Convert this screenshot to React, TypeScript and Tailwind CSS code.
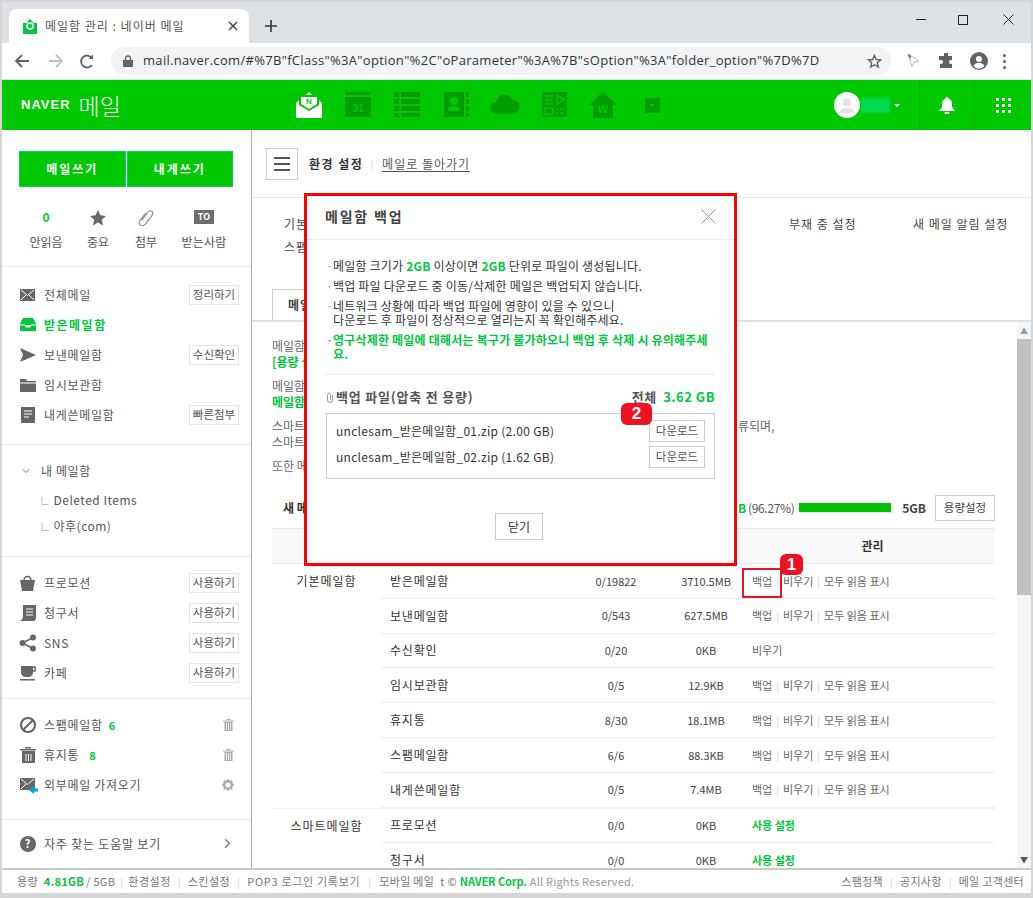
import { ReactNode } from 'react';
import { ChevronDown, ChevronRight } from 'lucide-react';

const GREEN = 'text-[#00c73c]';

const TabGlobe = () => (
  <svg width="16" height="16" viewBox="0 0 16 16">
    <path d="M1 5h4l1-2 2-2 2 2 1 2h4v11H1z" fill="#00c73c" />
    <circle cx="8" cy="8" r="3" fill="none" stroke="#fff" strokeWidth="1.6" />
  </svg>
);

const Ico = ({ children, w = 18, h = 18 }: { children: ReactNode; w?: number; h?: number }) => (
  <svg width={w} height={h} viewBox={`0 0 ${w} ${h}`} fill="#666" className="shrink-0">
    {children}
  </svg>
);

const sideIcons: Record<string, ReactNode> = {
  all: (
    <Ico>
      <rect x="1" y="3" width="15" height="12" />
      <path d="M2 4l6.500 5.500L15 4M2 14l5-5M15 14l-5-5" stroke="#fff" fill="none" />
    </Ico>
  ),
  inbox: (
    <Ico>
      <path d="M4 2h10l3 6v7H1V8z M1 9h5l1 2h4l1-2h5" fill="#00c73c" />
      <path d="M1 9h5l1 2h4l1-2h5" fill="none" stroke="#fff" />
    </Ico>
  ),
  sent: (
    <Ico>
      <path d="M1 2l16 7-16 7 3-7z" />
    </Ico>
  ),
  draft: (
    <Ico>
      <path d="M1 3h6l1 2h9v11H1z" />
      <path d="M1 7h16" stroke="#fff" />
    </Ico>
  ),
  self: (
    <Ico>
      <rect x="2" y="1" width="14" height="16" />
      <path d="M5 5h8M5 8h8M5 11h5" stroke="#fff" strokeWidth="1.200" />
    </Ico>
  ),
  bag: (
    <Ico>
      <path d="M1 6h15l-2 11H3z" />
      <path d="M5 6a3.500 3.500 0 017 0" fill="none" stroke="#666" strokeWidth="1.500" />
    </Ico>
  ),
  bill: (
    <Ico>
      <path d="M4 1h13v12c0 2-1 4-2 4H1c1-1 3-2 3-4z" />
      <path d="M7 5h7M7 8h7M7 11h7" stroke="#fff" strokeDasharray="7 0" />
    </Ico>
  ),
  share: (
    <Ico>
      <circle cx="3.500" cy="9" r="3" />
      <circle cx="14" cy="3.500" r="3" />
      <circle cx="14" cy="14.500" r="3" />
      <path d="M3.500 9L14 3.500M3.500 9L14 14.500" stroke="#666" strokeWidth="1.500" />
    </Ico>
  ),
  cafe: (
    <Ico>
      <path d="M2 2h12v6c0 3-2 5-5 5H7c-3 0-5-2-5-5z" />
      <path d="M14 3h2v4h-2" fill="none" stroke="#666" strokeWidth="1.500" />
      <rect x="1" y="15" width="15" height="1.500" />
    </Ico>
  ),
  spam: (
    <Ico>
      <circle cx="9" cy="9" r="7" fill="none" stroke="#666" strokeWidth="2.200" />
      <path d="M4 14L14 4" stroke="#666" strokeWidth="2.200" />
    </Ico>
  ),
  trash: (
    <Ico>
      <path d="M3 5h13v12H3zM1 3h16v1.500H1zM6 1h6v1.500H6z" />
      <path d="M7 8v7M9.500 8v7M12 8v7" stroke="#fff" />
    </Ico>
  ),
  ext: (
    <Ico w={20}>
      <rect x="1" y="2" width="15" height="12" />
      <path d="M2 3l6.500 5.500L15 3M2 13l5-5" stroke="#fff" fill="none" />
      <path d="M10 14l5-4v2.500h4v3h-4V18z" fill="#00a0e0" />
    </Ico>
  ),
};

const SmallBtn = ({ label }: { label: string }) => (
  <span className="flex h-[20px] w-[50px] items-center justify-center border border-[#e3e3e3] text-[11.5px] text-[#555]">
    {label}
  </span>
);

const SideRow = ({
  icon,
  label,
  btn,
  active,
  tail,
  count,
  wideCount,
}: {
  icon: string;
  label: string;
  btn?: string;
  active?: boolean;
  tail?: ReactNode;
  count?: string;
  wideCount?: boolean;
}) => (
  <div className="flex h-[30px] items-center pl-[17px] pr-[12px]">
    <span className="w-[25px]">{sideIcons[icon]}</span>
    <span className={active ? `font-bold tracking-[1.5px] ${GREEN}` : 'tracking-[0.7px] text-[#555]'}>{label}</span>
    {count && <span className={`text-[11px] font-bold ${wideCount ? 'ml-[10px]' : 'ml-[6px]'} ${GREEN}`}>{count}</span>}
    <span className="ml-auto">{btn ? <SmallBtn label={btn} /> : tail}</span>
  </div>
);

const TrashTail = () => (
  <svg width="11" height="12" viewBox="0 0 11 12" className="mr-[5px] block" fill="#aaa">
    <path d="M0 1.500h11v1H0zM1.500 3h8v9h-8zM3.500 0h4v1h-4z" />
    <path d="M3.500 4v7M5.500 4v7M7.500 4v7" stroke="#fff" strokeWidth="0.800" />
  </svg>
);

const Sidebar = () => (
  <aside className="flex w-[250px] shrink-0 flex-col border-r border-[#b5b5b5] bg-white text-[12px]">
    <div className="h-[137px] border-b border-[#ebebeb]">
      <div className="flex pl-[17px] pt-[21px]">
        {['메일쓰기', '내게쓰기'].map(t => (
          <span
            key={t}
            className="mr-px flex h-[36px] w-[106.500px] items-center justify-center border border-[#00d06a] bg-[#00c800] text-[12px] font-bold tracking-[2px] text-white"
          >
            {t}
          </span>
        ))}
      </div>
      <div className="mt-[21px] grid grid-cols-[46px_58px_38px_78px] pl-[21px] text-[#555]">
        <div className="flex flex-col items-center">
          <span className={`h-[20px] text-[12px] font-bold ${GREEN}`}>0</span>
          <span className="mt-[5px]">안읽음</span>
        </div>
        <div className="flex flex-col items-center">
          <svg width="16" height="16" viewBox="0 0 16 16" fill="#666" className="h-[20px]">
            <path d="M8 0l2.400 5.300 5.600.6-4.200 3.800 1.200 5.700L8 12.500l-5 2.900 1.200-5.700L0 5.900l5.600-.6z" />
          </svg>
          <span className="mt-[5px]">중요</span>
        </div>
        <div className="flex flex-col items-center">
          <svg width="16" height="18" viewBox="0 0 16 18" fill="none" stroke="#999" strokeWidth="1.300" className="h-[20px]">
            <path d="M4 11l6-8c1-1.500 3-1.500 4-.5s1 2.500 0 4l-7 9c-1.500 1.500-3 1.500-4.500.5S1 13 2 11.500L8 4" />
          </svg>
          <span className="mt-[5px]">첨부</span>
        </div>
        <div className="flex flex-col items-center">
          <span className="mt-[2px] flex h-[14px] w-[20px] items-center justify-center bg-[#6e6e6e] text-[9px] font-bold text-white">TO</span>
          <span className="mt-[9px] tracking-[0.2px]">받는사람</span>
        </div>
      </div>
    </div>
    <div className="h-[178px] border-b border-[#ebebeb] pt-[13px]">
      <SideRow icon="all" label="전체메일" btn="정리하기" />
      <SideRow icon="inbox" label="받은메일함" active />
      <SideRow icon="sent" label="보낸메일함" btn="수신확인" />
      <SideRow icon="draft" label="임시보관함" />
      <SideRow icon="self" label="내게쓴메일함" btn="빠른첨부" />
    </div>
    <div className="h-[112px] border-b border-[#ebebeb] text-[#555]">
      <div className="flex h-[42px] items-center pl-[18px] pt-[10px] tracking-[0.6px]">
        <ChevronDown size={12} className="mr-[9px] text-[#777]" />내 메일함
      </div>
      <div className="flex h-[26px] items-center pl-[38px] tracking-[0.5px]">
        <span className="mr-[3px] text-[10px] text-[#aaa]">∟</span>Deleted Items
      </div>
      <div className="flex h-[26px] items-center pl-[38px] tracking-[0.5px]">
        <span className="mr-[3px] text-[10px] text-[#aaa]">∟</span>야후(com)
      </div>
    </div>
    <div className="h-[142px] border-b border-[#ebebeb] pt-[11px]">
      <SideRow icon="bag" label="프로모션" btn="사용하기" />
      <SideRow icon="bill" label="청구서" btn="사용하기" />
      <SideRow icon="share" label="SNS" btn="사용하기" />
      <SideRow icon="cafe" label="카페" btn="사용하기" />
    </div>
    <div className="h-[121px] border-b border-[#ebebeb] pt-[11px]">
      <SideRow icon="spam" label="스팸메일함" count="6" tail={<TrashTail />} />
      <SideRow icon="trash" label="휴지통" count="8" wideCount tail={<TrashTail />} />
      <SideRow
        icon="ext"
        label="외부메일 가져오기"
        tail={
          <svg width="12" height="12" viewBox="0 0 12 12" className="mr-[5px] block">
            <circle cx="6" cy="6" r="3.800" fill="none" stroke="#aaa" strokeWidth="2.400" />
            <path d="M6 0v2M6 10v2M0 6h2M10 6h2M1.800 1.800l1.400 1.400M8.800 8.800l1.400 1.400M1.800 10.200l1.400-1.400M8.800 3.200l1.400-1.400" stroke="#aaa" strokeWidth="1.600" />
          </svg>
        }
      />
    </div>
    <div className="flex h-[47px] items-center pl-[18px] pr-[16px] tracking-[0.8px] text-[#555]">
      <span className="mr-[8px] flex h-[16px] w-[16px] items-center justify-center rounded-full bg-[#666] text-[11px] font-bold text-white">?</span>
      자주 찾는 도움말 보기
      <ChevronRight size={15} className="ml-auto text-[#777]" />
    </div>
  </aside>
);

type Row = { name: string; count: string; size: string; kind: 'full' | 'empty' | 'use'; boxed?: boolean };

const basic: Row[] = [
  { name: '받은메일함', count: '0/19822', size: '3710.5MB', kind: 'full', boxed: true },
  { name: '보낸메일함', count: '0/543', size: '627.5MB', kind: 'full' },
  { name: '수신확인', count: '0/20', size: '0KB', kind: 'empty' },
  { name: '임시보관함', count: '0/5', size: '12.9KB', kind: 'full' },
  { name: '휴지통', count: '8/30', size: '18.1MB', kind: 'full' },
  { name: '스팸메일함', count: '6/6', size: '88.3KB', kind: 'full' },
  { name: '내게쓴메일함', count: '0/5', size: '7.4MB', kind: 'full' },
];
const smart: Row[] = [
  { name: '프로모션', count: '0/0', size: '0KB', kind: 'use' },
  { name: '청구서', count: '0/0', size: '0KB', kind: 'use' },
];

const Sep = () => <span className="mx-[4px] text-[10px] text-[#ccc]">|</span>;

const Manage = ({ row }: { row: Row }) => {
  if (row.kind === 'use') return <span className={`pl-[2px] text-[11px] font-bold ${GREEN}`}>사용 설정</span>;
  if (row.kind === 'empty') return <span className="pl-[2px] text-[11px] text-[#666]">비우기</span>;
  return (
    <span className="flex items-center pl-[2px] text-[11px] text-[#666]">
      백업<Sep />비우기<Sep />모두 읽음 표시
    </span>
  );
};

const TableRows = ({ rows }: { rows: Row[] }) => (
  <div className="flex-1">
    {rows.map(r => (
      <div key={r.name} className="grid h-[34.800px] grid-cols-[189px_92px_88px_1fr] items-center border-b border-[#eee] text-[#333]">
        <span className="pl-[9px] tracking-[0.8px]">{r.name}</span>
        <span className="text-center text-[11px] text-[#444]">{r.count}</span>
        <span className="text-center text-[11px] text-[#444]">{r.size}</span>
        <Manage row={r} />
      </div>
    ))}
  </div>
);

const Main = () => (
  <main className="flex min-w-0 flex-1 flex-col text-[12px]">
    <div className="flex h-[68px] items-center border-b border-[#e5e5e5] pl-[14px]">
      <span className="flex h-[32px] w-[32px] flex-col items-center justify-center gap-[4px] border border-[#ccc]">
        <i className="h-[2px] w-[16px] bg-[#555]" />
        <i className="h-[2px] w-[16px] bg-[#555]" />
        <i className="h-[2px] w-[16px] bg-[#555]" />
      </span>
      <b className="ml-[11px] tracking-[1.5px] text-[#333]">환경 설정</b>
      <span className="ml-[7px] mr-[9px] text-[10px] text-[#ccc]">|</span>
      <span className="tracking-[1px] text-[#555] underline underline-offset-2">메일로 돌아가기</span>
    </div>
    <div className="h-[124px] border-b-2 border-[#e0e0e0] tracking-[1px] text-[#444]">
      <div className="flex h-[37px] items-end pb-[2px] pl-[32px]">
        <span className="w-[505px] shrink-0">기본 환경 설정</span>
        <span className="w-[124px] shrink-0 whitespace-nowrap">부재 중 설정</span>
        <span className="whitespace-nowrap">새 메일 알림 설정</span>
      </div>
      <div className="mt-[3px] pl-[32px] leading-[18px]">스팸 설정</div>
      <div className="ml-[20px] mt-[33px] flex h-[31px] w-[110px] items-center border border-b-0 border-[#ccc] bg-white pl-[15px] font-bold">
        메일함 관리
      </div>
    </div>
    <div className="flex min-h-0 flex-1">
      <div className="min-w-0 flex-1 overflow-hidden pl-[20px] pr-[22px]">
        <div className="pt-[16px] leading-[16px] text-[#666]">
          <p>메일함 관리에서 메일함을 추가할 수 있습니다.</p>
          <p className={`font-bold ${GREEN}`}>[용량 설정]에서 변경합니다.</p>
          <p className="mt-[8px]">메일함 백업을 이용하세요.</p>
          <p className={`font-bold ${GREEN}`}>메일함 백업은 압축 파일로 제공됩니다.</p>
          <p className="mt-[8px] flex">
            <span className="w-[466px] shrink-0 overflow-hidden whitespace-nowrap">스마트메일함은 프로모션, 청구서, SNS, 카페 메일로 분류되어 있는 메일함입니다.</span>
            <span>류되며,</span>
          </p>
          <p>스마트메일함을 사용할 수 있습니다.</p>
          <p className="mt-[8px]">또한 메일함을 관리할 수 있습니다.</p>
        </div>
        <div className="mt-[20px] flex h-[27px] items-center">
          <b className="w-[466px] shrink-0 pl-[11px] text-[#333]">새 메일함 만들기</b>
          <span className="flex whitespace-nowrap text-[12px] tracking-[-0.3px] text-[#555]">
            <b className={GREEN}>B</b>
            <span className="ml-[2px]">(96.27%)</span>
          </span>
          <span className="ml-[4px] h-[10px] w-[100px] border-b border-[#e5e5e5] bg-[#f2f2f2]">
            <span className="block h-[9px] bg-[#00c000]" style={{ width: '96.27%' }} />
          </span>
          <b className="ml-[8px] text-[12px] text-[#444]">5GB</b>
          <span className="ml-[9px] flex h-[26px] w-[60px] shrink-0 items-center justify-center border border-[#ccc] text-[11.5px] text-[#444]">
            용량설정
          </span>
        </div>
        <div className="mt-[7px] grid h-[36px] grid-cols-[109px_189px_92px_88px_1fr] items-center border-y border-[#ebebeb] bg-[#f9f9f9] text-center font-bold text-[#333]">
          <span>구분</span>
          <span>메일함</span>
          <span>메일 수</span>
          <span>용량</span>
          <span>관리</span>
        </div>
        <div className="flex">
          <div className="w-[109px] pt-[8px] text-center tracking-[1px] text-[#333]">기본메일함</div>
          <TableRows rows={basic} />
        </div>
        <div className="flex border-t border-[#eee]">
          <div className="w-[109px] pt-[8px] text-center tracking-[1px] text-[#333]">스마트메일함</div>
          <TableRows rows={smart} />
        </div>
      </div>
      <div className="flex w-[14px] shrink-0 flex-col bg-[#f5f5f5]">
        <span className="flex h-[17px] items-center justify-center text-[8px] text-[#999]">▲</span>
        <span className="h-[256px] bg-[#c1c1c1]" />
        <span className="mt-auto flex h-[17px] items-center justify-center text-[8px] text-[#555]">▼</span>
      </div>
    </div>
  </main>
);

const Bullet = ({ children, green }: { children: ReactNode; green?: boolean }) => (
  <li className={`flex tracking-[0.2px] ${green ? `font-bold ${GREEN}` : 'text-[#333]'}`}>
    <span className="w-[7px] shrink-0 text-[#999]">·</span>
    <span>{children}</span>
  </li>
);

const BackupModal = () => (
  <div className="absolute left-[304px] top-[193px] flex h-[373px] w-[433px] flex-col border-[3px] border-[#ff0000] bg-white text-[12px]">
    <div className="flex h-[44px] shrink-0 items-center justify-between border-b border-[#ebebeb] pb-[2px] pl-[18px] pr-[18px]">
      <b className="text-[14px] tracking-[1.800px] text-[#444]">메일함 백업</b>
      <svg width="15" height="15" viewBox="0 0 15 15" stroke="#999" fill="none">
        <path d="M.500.500l14 14M14.500.500l-14 14" />
      </svg>
    </div>
    <div className="mx-[19px] mt-[19px] h-[116px] border-b border-[#ebebeb]">
      <ul className="flex flex-col gap-[6px] leading-[14px]">
        <Bullet>
          메일함 크기가 <b className={GREEN}>2GB</b> 이상이면 <b className={GREEN}>2GB</b> 단위로 파일이 생성됩니다.
        </Bullet>
        <Bullet>백업 파일 다운로드 중 이동/삭제한 메일은 백업되지 않습니다.</Bullet>
        <Bullet>
          네트워크 상황에 따라 백업 파일에 영향이 있을 수 있으니
          <br />
          다운로드 후 파일이 정상적으로 열리는지 꼭 확인해주세요.
        </Bullet>
        <Bullet green>영구삭제한 메일에 대해서는 복구가 불가하오니 백업 후 삭제 시 유의해주세요.</Bullet>
      </ul>
    </div>
    <div className="mx-[19px] mt-[9px] flex h-[26px] items-center justify-between text-[13px]">
      <span className="flex items-center font-bold tracking-[0.8px] text-[#555]">
        <svg width="8" height="11" viewBox="0 0 8 11" fill="none" stroke="#999" className="mr-[2px]">
          <path d="M6.500 3v5a2.500 2.500 0 01-5 0V2.500a1.500 1.500 0 013 0V8" />
        </svg>
        백업 파일(압축 전 용량)
      </span>
      <span className="font-bold tracking-[0.5px] text-[#555]">
        전체 <span className={`ml-[3px] ${GREEN}`}>3.62 GB</span>
      </span>
    </div>
    <div className="mx-[19px] mt-[3px] flex h-[66px] flex-col gap-[4px] border border-[#ccc] px-[9px] pt-[6px] text-[#333]">
      {['unclesam_받은메일함_01.zip (2.00 GB)', 'unclesam_받은메일함_02.zip (1.62 GB)'].map(f => (
        <div key={f} className="flex h-[22px] items-center justify-between tracking-[0.3px]">
          <span>{f}</span>
          <span className="flex h-[22px] w-[56px] items-center justify-center border border-[#ccc] text-[11.500px] tracking-normal text-[#555]">다운로드</span>
        </div>
      ))}
    </div>
    <span className="ml-[188px] mt-[34px] flex h-[27px] w-[48px] items-center justify-center border border-[#ccc] text-[#333]">닫기</span>
  </div>
);

const Badge = ({ n, className }: { n: number; className: string }) => (
  <span className={`absolute flex items-center justify-center rounded-[6px] bg-[#ee1122] font-['Liberation_Sans',sans-serif] text-[17px] font-bold text-white ${className}`}>{n}</span>
);

const dark = '#009c00';

const AppBar = () => (
  <header className="flex h-[50px] shrink-0 items-center bg-[#00c800] pl-[19px] text-white">
    <div className="flex w-[263.500px] items-center">
      <span className="font-['Liberation_Sans',sans-serif] text-[13px] font-black tracking-[1px]">NAVER</span>
      <span className="ml-[8px] text-[23px] font-light leading-none">메일</span>
    </div>
    <div className="grid grid-cols-[repeat(8,49px)] justify-items-center">
      <svg width="28" height="26" viewBox="0 0 28 26" fill="#fff">
        <path d="M14 0l3 3h-6zM1 11l3-3v5l10 6 10-6V8l3 3v15H1z" />
        <path d="M6 5h16v7l-8 5-8-5z" />
        <text x="14" y="12" fontSize="8" fontWeight="700" textAnchor="middle" fill="#00c800" fontFamily="Liberation Sans">N</text>
      </svg>
      <svg width="26" height="25" viewBox="0 0 26 25" fill={dark}>
        <path d="M0 0h26v3H0zM0 5h26v20H0z" />
        <text x="13" y="20" fontSize="11" fontWeight="700" textAnchor="middle" fill="#00c800" fontFamily="Liberation Sans">31</text>
      </svg>
      <svg width="26" height="25" viewBox="0 0 26 25" fill={dark}>
        <path d="M0 0h5v5H0zM7 0h19v5H7zM0 7h5v5H0zM7 7h19v5H7zM0 14h5v5H0zM7 14h19v5H7zM0 21h5v4H0zM7 21h19v4H7z" />
      </svg>
      <svg width="25" height="25" viewBox="0 0 25 25" fill={dark}>
        <path d="M0 0h20v25H0zM22 0h3v5h-3zM22 7h3v5h-3zM22 14h3v5h-3zM22 21h3v4h-3z" />
        <circle cx="10" cy="9" r="4" fill="#00c800" />
        <path d="M4 19c0-4 3-5 6-5s6 1 6 5z" fill="#00c800" />
      </svg>
      <svg width="30" height="22" viewBox="0 0 30 22" fill={dark}>
        <path d="M7 22a6 6 0 01-1-12 9 9 0 0117-2 7 7 0 010 14z" />
      </svg>
      <svg width="25" height="25" viewBox="0 0 25 25" fill={dark}>
        <path d="M0 0h25v25H0z" />
        <path d="M3 4h8M3 8h8M3 12h8M15 3v9l7-4.500zM3 16h8v6H3zM14 17h2M18 17h4M14 21h2M18 21h4" stroke="#00c800" strokeWidth="1.500" fill="none" />
      </svg>
      <svg width="28" height="26" viewBox="0 0 28 26" fill={dark}>
        <path d="M14 0l14 13h-4v13H4V13H0z" />
        <text x="14" y="21" fontSize="11" fontWeight="700" textAnchor="middle" fill="#00c800" fontFamily="Liberation Sans">W</text>
      </svg>
      <svg width="15" height="15" viewBox="0 0 15 15" fill={dark} className="self-center">
        <path d="M0 0h15v15H0z" />
        <path d="M5 6h5L7.500 9z" fill="#00c800" />
      </svg>
    </div>
    <div className="ml-auto flex h-full items-center">
      <span className="flex h-[26px] w-[26px] items-center justify-center overflow-hidden rounded-full bg-white">
        <svg width="14" height="15" viewBox="0 0 14 15" fill="#e4e4e4">
          <circle cx="7" cy="4.500" r="4" />
          <path d="M0 15c0-4 3-5 7-5s7 1 7 5z" />
        </svg>
      </span>
      <span className="ml-px h-[15px] w-[29px] bg-[#00d94f] blur-[1px]" />
      <span className="ml-[4px] h-0 w-0 border-x-[3px] border-t-[3px] border-x-transparent border-t-white" />
      <span className="ml-[19px] flex h-full w-[56px] items-center justify-center border-x border-[#00b800]">
        <svg width="16" height="17" viewBox="0 0 16 17" fill="#fff">
          <path d="M8 0c1 0 1.500.5 1.500 1.500C12 2.500 13 4.500 13 7v3l3 4H0l3-4V7c0-2.500 1-4.500 3.500-5.500C6.500.5 7 0 8 0zM5.500 15h5a2.500 2.500 0 01-5 0z" />
        </svg>
      </span>
      <span className="flex w-[56px] justify-center">
        <span className="grid grid-cols-3 gap-[3px]">
          {Array.from({ length: 9 }).map((_, i) => (
            <i key={i} className="h-[3px] w-[3px] bg-white" />
          ))}
        </span>
      </span>
    </div>
  </header>
);

const BrowserBar = () => (
  <div className="shrink-0 font-['Open_Sans','Noto_Sans_CJK_KR',sans-serif]">
    <div className="flex h-[41px] items-end bg-[#dee1e6] pl-[7px]">
      <div className="flex h-[34px] w-[240px] items-center rounded-t-[8px] bg-white pl-[13px] pr-[10px]">
        <TabGlobe />
        <span className="ml-[7px] font-['Noto_Sans_CJK_KR',sans-serif] text-[12px] tracking-[1px] text-[#555]">메일함 관리 : 네이버 메일</span>
        <svg width="10" height="10" viewBox="0 0 10 10" stroke="#444" strokeWidth="1.500" className="ml-auto mr-[1px]">
          <path d="M1 1l8 8M9 1L1 9" />
        </svg>
      </div>
      <svg width="12" height="12" viewBox="0 0 12 12" stroke="#333" strokeWidth="1.600" className="mb-[11px] ml-[16px]">
        <path d="M6 0v12M0 6h12" />
      </svg>
      <div className="mb-[18px] ml-auto flex items-center">
        <span className="h-px w-[10px] bg-[#222]" />
        <span className="ml-[32px] h-[10px] w-[10px] border border-[#222]" />
        <svg width="11" height="11" viewBox="0 0 11 11" stroke="#222" className="ml-[35px] mr-[17px]">
          <path d="M.500.500l10 10M10.500.500l-10 10" />
        </svg>
      </div>
    </div>
    <div className="flex h-[37px] items-center border-b border-[#dfe1e5] bg-white pl-[12px]">
      <svg width="16" height="14" viewBox="0 0 16 14" stroke="#5f6368" strokeWidth="1.800" fill="none">
        <path d="M15 7H2M8 1L2 7l6 6" />
      </svg>
      <svg width="16" height="14" viewBox="0 0 16 14" stroke="#bdc1c6" strokeWidth="1.800" fill="none" className="ml-[18px]">
        <path d="M1 7h13M8 1l6 6-6 6" />
      </svg>
      <svg width="15" height="15" viewBox="0 0 15 15" stroke="#5f6368" strokeWidth="1.800" fill="none" className="ml-[15px]">
        <path d="M13 4a6 6 0 100 7" />
        <path d="M14 .500V5H9.500z" fill="#5f6368" stroke="none" />
      </svg>
      <div className="ml-[17px] flex h-[28px] w-[780px] items-center rounded-full bg-[#f1f3f4] pl-[12px] pr-[9px]">
        <svg width="10" height="12" viewBox="0 0 10 12" fill="#5f6368">
          <path d="M0 5h10v7H0z" />
          <path d="M2.500 5V3.500a2.500 2.500 0 015 0V5" fill="none" stroke="#5f6368" strokeWidth="1.300" />
        </svg>
        <span className="ml-[10px] whitespace-nowrap text-[13px] tracking-[0.31px] text-[#333]">
          mail.naver.com/#%7B&quot;fClass&quot;%3A&quot;option&quot;%2C&quot;oParameter&quot;%3A%7B&quot;sOption&quot;%3A&quot;folder_option&quot;%7D%7D
        </span>
        <svg width="15" height="15" viewBox="0 0 15 15" fill="none" stroke="#5f6368" strokeWidth="1.400" className="ml-auto">
          <path d="M7.500 1.500l1.800 4 4.200.4-3.200 2.900 1 4.200-3.800-2.300-3.800 2.300 1-4.200-3.200-2.900 4.200-.4z" />
        </svg>
      </div>
      <svg width="14" height="16" viewBox="0 0 14 16" fill="none" stroke="#bbb" className="ml-[16px]">
        <path d="M1 1l11 7-5 1-2 5z" />
        <path d="M1 1l2 5 1-3z" fill="#8a2a8a" stroke="none" />
      </svg>
      <svg width="16" height="16" viewBox="0 0 16 16" fill="#5f6368" className="ml-[17px]">
        <path d="M6 1a2 2 0 014 0v2h4v4h-1a2 2 0 000 4h1v4H2v-4h1a2 2 0 000-4H1V3h5z" />
      </svg>
      <svg width="18" height="18" viewBox="0 0 18 18" className="ml-[16px]">
        <circle cx="9" cy="9" r="9" fill="#5f6368" />
        <circle cx="9" cy="7" r="3" fill="#fff" />
        <path d="M3.500 14c1-2.500 3.500-3 5.500-3s4.500.5 5.500 3a7 7 0 01-11 0z" fill="#fff" />
      </svg>
      <span className="ml-[15px] flex flex-col gap-[3px]">
        <i className="h-[3px] w-[3px] rounded-full bg-[#5f6368]" />
        <i className="h-[3px] w-[3px] rounded-full bg-[#5f6368]" />
        <i className="h-[3px] w-[3px] rounded-full bg-[#5f6368]" />
      </span>
    </div>
  </div>
);

const FootSep = () => <span className="mx-[7px] text-[10px] text-[#ccc]">|</span>;

const Footer = () => (
  <footer className="flex h-[25px] shrink-0 items-center border-t-2 border-[#c9c9c9] bg-white pl-[15px] pr-[7px] text-[11px] tracking-[0.3px] text-[#777]">
    <span>용량</span>
    <b className={`ml-[6px] ${GREEN}`}>4.81GB</b>
    <span className="ml-[2px]">/ 5GB</span>
    <span className="mx-[5px] text-[10px] text-[#ccc]">|</span>
    <span className="tracking-[0.5px]">환경설정</span>
    <FootSep />
    <span className="tracking-[0.5px]">스킨설정</span>
    <FootSep />
    <span className="tracking-[0.7px]">POP3 로그인 기록보기</span>
    <span className="mx-[8px] text-[10px] text-[#ccc]">|</span>
    <span>모바일 메일</span>
    <span className="ml-[6px]">t © </span>
    <b className={`ml-[3px] tracking-[-0.1px] ${GREEN}`}>NAVER Corp.</b>
    <span className="ml-[3px] tracking-[0.2px] text-[#999]">All Rights Reserved.</span>
    <span className="ml-auto">스팸정책</span>
    <FootSep />
    <span>공지사항</span>
    <FootSep />
    <span>메일 고객센터</span>
  </footer>
);

export default function App() {
  return (
    <div className="relative h-[898px] w-[1033px] overflow-hidden bg-[#d6d6d6] px-[2px] pb-[5px] pt-[2px] font-['Noto_Sans_CJK_KR','Noto_Sans',sans-serif]">
      <div className="flex h-full flex-col bg-white">
        <BrowserBar />
        <AppBar />
        <div className="flex min-h-0 flex-1">
          <Sidebar />
          <Main />
        </div>
        <Footer />
      </div>
      <BackupModal />
      <Badge n={2} className="left-[621px] top-[403px] h-[22px] w-[31px]" />
      <span className="absolute left-[742px] top-[568px] h-[30px] w-[40px] border-2 border-[#ee1122]" />
      <Badge n={1} className="left-[780px] top-[554px] h-[21px] w-[23px]" />
    </div>
  );
}
